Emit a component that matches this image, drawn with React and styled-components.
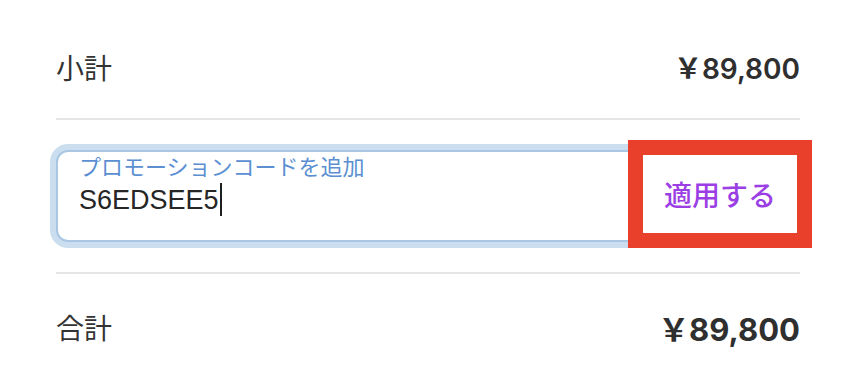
import React from "react";
import styled, { createGlobalStyle } from "styled-components";

const GlobalStyle = createGlobalStyle`
  body {
    margin: 0;
    background: #ffffff;
    font-family: "Liberation Sans", "Noto Sans CJK JP", sans-serif;
    color: #2f2f2f;
  }
`;

function App() {
  return (
    <>
      <GlobalStyle />
      <Summary>
        <Row height="102px" top="16px">
          <Label>小計</Label>
          <Price>￥89,800</Price>
        </Row>
        <Divider />
        <PromoSection>
          <Field>
            <FloatingLabel>プロモーションコードを追加</FloatingLabel>
            <Value>
              S6EDSEE5
              <Caret />
            </Value>
            <ApplyButton type="button">適用する</ApplyButton>
          </Field>
        </PromoSection>
        <Divider />
        <Row height="106px">
          <Label>合計</Label>
          <Price total>￥89,800</Price>
        </Row>
      </Summary>
    </>
  );
}

export default App;

const Summary = styled.div`
  width: 744px;
  padding: 0 42px 0 56px;
`;

const Row = styled.div`
  display: flex;
  align-items: center;
  justify-content: space-between;
  height: ${(props) => props.height};
  margin-top: ${(props) => props.top || "0"};
`;

const Label = styled.span`
  font-family: "Noto Sans CJK JP", sans-serif;
  font-size: 28px;
  color: #333333;
`;

const Price = styled.span`
  font-family: Inter, "Noto Sans CJK JP", sans-serif;
  font-size: ${(props) => (props.total ? "31px" : "28px")};
  font-weight: ${(props) => (props.total ? 700 : 600)};
  color: #2f2f2f;
`;

const Divider = styled.div`
  height: 2px;
  background: #e6e6e6;
`;

const PromoSection = styled.div`
  height: 152px;
  display: flex;
  align-items: center;
`;

const Field = styled.div`
  position: relative;
  flex: 1;
  height: 92px;
  box-sizing: border-box;
  border: 2px solid #a9c6e2;
  border-radius: 12px;
  box-shadow: 0 0 0 6px #cadef0;
  padding: 0 21px;
  background: #ffffff;
`;

const FloatingLabel = styled.div`
  font-family: "Noto Sans CJK JP", sans-serif;
  font-size: 22px;
  line-height: 26px;
  color: #5b8fd2;
`;

const Value = styled.div`
  margin-top: 5px;
  font-size: 27px;
  line-height: 32px;
  color: #262626;
  display: flex;
  align-items: center;
`;

const Caret = styled.span`
  display: inline-block;
  width: 2px;
  height: 33px;
  margin-left: 1px;
  background: #1f1f1f;
`;

const ApplyButton = styled.button`
  position: absolute;
  top: -12px;
  right: -14px;
  width: 184px;
  height: 108px;
  box-sizing: border-box;
  border: 15px solid #e9402b;
  background: #ffffff;
  font-family: "Noto Sans CJK JP", sans-serif;
  font-size: 28px;
  font-weight: 500;
  color: #9b3fe5;
  display: flex;
  align-items: center;
  justify-content: center;
  padding: 0;
  cursor: pointer;
`;
